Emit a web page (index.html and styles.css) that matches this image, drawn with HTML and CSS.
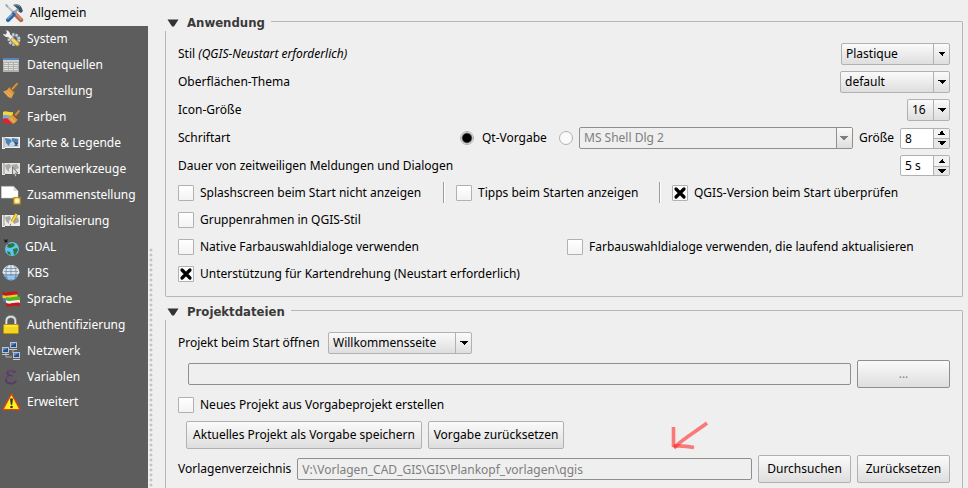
FILE: index.html
```html
<!DOCTYPE html>
<html lang="de">
<head>
<meta charset="utf-8">
<title>Optionen – Allgemein</title>
<link rel="stylesheet" href="styles.css">
</head>
<body>
<nav class="sidebar">
  <a class="item active" href="#allgemein"><svg class="icon" viewBox="0 0 20 20"><path d="M2 2l8 8" stroke="#b9c4cc" stroke-width="2"/><path d="M1 1l2 .5 1 2-1 1z" fill="#8fa3b3"/><path d="M10 10l7 7" stroke="#b5684a" stroke-width="4.4" stroke-linecap="round"/><path d="M10.500 9.500l7 7" stroke="#d59375" stroke-width="1.400"/><path d="M14 6L9 11" stroke="#8aa6bd" stroke-width="2.400"/><path d="M9.500 11.500L4 17" stroke="#2c62a6" stroke-width="4" stroke-linecap="round"/><path d="M8.500 11L3.500 16" stroke="#7fa9d9" stroke-width="1.200"/><path d="M9 2c3-1.600 6-.8 8 1.500L19 8l-2 2-2.500-1.500v-2L11.500 4z" fill="#3c5566"/><path d="M10 2.200c2.500-.8 4.500 0 6 1.500" stroke="#8ca2ae" fill="none"/></svg><span>Allgemein</span></a>
  <a class="item" href="#system"><svg class="icon" viewBox="0 0 20 20"><circle cx="13" cy="10.500" r="5" fill="#7d8ea3" stroke="#c3ced9" stroke-width="2.800" stroke-dasharray="2.300 1.200"/><circle cx="13" cy="10.500" r="3" fill="#4d6077"/><path d="M7 6l5 4" stroke="#efefec" stroke-width="3"/><path d="M2 5l3 .5L6 3 4.500 1.500C7 1 9.500 3 9 6 8 9 4 9 2 5z" fill="#f2f2ee"/><path d="M12 11l4.500 4" stroke="#b68a22" stroke-width="4.600" stroke-linecap="round"/><path d="M11.800 10.800l4.400 4" stroke="#f2d675" stroke-width="3" stroke-linecap="round"/></svg><span>System</span></a>
  <a class="item" href="#datenquellen"><svg class="icon" viewBox="0 0 20 20"><path fill="#b0b1ac" d="M2 3h16v14H2z"/><path fill="#5585bd" d="M2 3h16v2H2z"/><path fill="#cfcfcb" d="M2 5h16v2H2z"/><path fill="#e1e1dc" d="M3 8h4v1H3zm5 0h4v1H8zm5 0h4v1h-4zM3 10h4v1H3zm5 0h4v1H8zm5 0h4v1h-4zM3 12h4v1H3zm5 0h4v1H8zm5 0h4v1h-4zM3 14h4v1H3zm5 0h4v1H8zm5 0h4v1h-4z"/></svg><span>Datenquellen</span></a>
  <a class="item" href="#darstellung"><svg class="icon" viewBox="0 0 20 20"><path d="M11 8.500L16 3" stroke="#c57c28" stroke-width="2.200" stroke-linecap="round"/><path d="M11 8L16 2.500" stroke="#eeaa58" stroke-linecap="round"/><path d="M8.500 6l5 5.500-1 1.500-2 4.500-3.500-1.500-5-5.500 4-1.500z" fill="#dc9c45"/><path d="M8.500 6.200l5 5.500" stroke="#a56520" stroke-width="1.200"/><path d="M4 11l5 5M6 10l4.500 4.500" stroke="#f0b767" stroke-width=".9"/></svg><span>Darstellung</span></a>
  <a class="item" href="#farben"><svg class="icon" viewBox="0 0 20 20"><path d="M2 5c3-2 6 1 10 0v5c-4 1-7-2-10 0z" fill="#f4d932"/><path d="M2 8.500c3-2 6 1 9 0v4c-3 1-6-2-9 0z" fill="#79a6dd"/><path d="M2 12c3-2 7 1 10 0v4c-3 2-8-1-10 0z" fill="#df242b"/><path d="M14.500 8l3.500-4" stroke="#d48a34" stroke-width="2" stroke-linecap="round"/><path d="M12 7l5 5-2 3-3 2-5-5 2-3z" fill="#dc9c45"/><path d="M12 7.200l4.800 5" stroke="#8b5014" stroke-width="1.300"/><path d="M9.500 11l4 4" stroke="#f0bd73"/></svg><span>Farben</span></a>
  <a class="item" href="#karte"><svg class="icon" viewBox="0 0 20 20"><path fill="#f1f1ed" d="M1 4h18v11H4v1H1z"/><path fill="#c8d5e0" d="M4 5h14v9H4z"/><path fill="#4b82b8" d="M4 5l5 1 2 2-2 2-1 3-3-3zM11 5l6 1v5l-3-1-3-2zM12 13l4-2 1 2z"/><path d="M3 4v11" stroke="#9b9b98"/><path d="M13 9l4 1-2 3z" fill="#3e464e"/></svg><span>Karte &amp; Legende</span></a>
  <a class="item" href="#kartenwerkzeuge"><svg class="icon" viewBox="0 0 20 20"><path fill="#e5e5e0" d="M1 4h18v11H4v1H1z"/><path fill="#aaaba7" d="M4 6l5-1 1 3-2 2v3l-3-3zM10 6l6-1 2 4-4 2-3-3z"/><path d="M3 4v11" stroke="#969693"/><path d="M11.500 8l5.500 6-2.500.2 1.500 3-1.500.8-1.500-3-1.500 1.500z" fill="#d8d8d8" stroke="#5a5a5a" stroke-width=".8"/></svg><span>Kartenwerkzeuge</span></a>
  <a class="item" href="#zusammenstellung"><svg class="icon" viewBox="0 0 20 20"><path fill="#fff" stroke="#d0d0d0" stroke-width=".6" d="M.4 1.400h12.200L17 6v7H.4z"/><path fill="#d5d5d5" d="M12.600 1.400L17 6h-4.400z"/><path fill="#d8ad22" stroke="#a88112" stroke-width=".7" d="M12.400 12.400h7.200v6.800h-7.200z"/><path d="M16 13v5.500M13.300 15.800h5.400M14 13.800l4 4M18 13.800l-4 4" stroke="#fff6cf" stroke-width="1.200"/></svg><span>Zusammenstellung</span></a>
  <a class="item" href="#digitalisierung"><svg class="icon" viewBox="0 0 20 20"><path fill="#ecece8" d="M1 4h18v11H4v1H1z"/><path fill="#a7a8a5" d="M4 6l5-1 1 3-2 2v3l-3-3zM12 9l5-3 1 5-5 2z"/><path d="M3 4v11" stroke="#969693"/><path d="M11 11l4.500-8" stroke="#a67e10" stroke-width="3.400"/><path d="M11 11l4.500-8" stroke="#f6d444" stroke-width="2.200"/><path d="M9.500 10l3 1.500-3.500 3z" fill="#eee3bd"/><path d="M9.300 13l-.5 1.700 1.400-.8z" fill="#333"/></svg><span>Digitalisierung</span></a>
  <a class="item" href="#gdal"><svg class="icon icon-small" viewBox="0 0 18 20"><circle cx="11" cy="12" r="7" fill="#62c3ec"/><path d="M7 7l5-1 2 2-2 2-3 1-3-1zM12 12l4-1 1 2-2 4-2 1zM6 14l3 1 1 3-3-1z" fill="#2b7a3d"/><path d="M4 3l5 7" stroke="#6d4b50" stroke-width=".9"/><path d="M3 2l2 1 2-1-1 2 1 1-2 0-1 1-.5-2z" fill="#191919"/></svg><span>GDAL</span></a>
  <a class="item" href="#kbs"><svg class="icon" viewBox="0 0 20 20"><circle cx="10" cy="10" r="7.500" fill="#7fb2e6"/><path d="M1.500 9.500c1-10 16-10 17 0L17 12H3z" fill="#dfe5e9"/><path d="M2 11.500h16M3 8.500h14M4 5.500h12M4 14.500h12M10 2v15M6.500 3c-2 4-2 10 0 14M13.500 3c2 4 2 10 0 14" fill="none" stroke="#66849f" stroke-width=".7"/><path d="M6 13h8l-1 3H7z" fill="#a9d2f8" fill-opacity=".7"/></svg><span>KBS</span></a>
  <a class="item" href="#sprache"><svg class="icon" viewBox="0 0 20 20"><path d="M1.500 3c5 2 9-1.500 15 0v3c-6-1-10 2-15 0z" fill="#c91616"/><path d="M1.500 6c5 2 9-1 15-.5v3C11 8 7 11 1.500 9z" fill="#f2cc28"/><path d="M2 9c3 1 5 0 6-.5V13c-2 .5-4 0-6-1z" fill="#477fc4"/><path d="M5 8c5 2 9-1.500 14 0v3.500c-5-1-9 2-14 0z" fill="#49b62c"/><path d="M5 11.300c5 2 9-1.500 14 0v3c-5-1-9 2-14 0z" fill="#f2f2ee"/><path d="M5 14c5 2 9-1.500 14 0v3c-5-1-9 1.500-14 0z" fill="#c91616"/></svg><span>Sprache</span></a>
  <a class="item" href="#authentifizierung"><svg class="icon" viewBox="0 0 20 20"><path d="M5.500 10V6c0-6 9-6 9 0v4" fill="none" stroke="#8d9395" stroke-width="2.800"/><path d="M5.300 10V6c0-5.600 9-5.600 9 0v4" fill="none" stroke="#e3e6e6" stroke-width="1.400"/><rect x="2.500" y="9.500" width="15" height="9" rx="1" fill="#f1d51f" stroke="#b99407"/><path d="M4 11h12" stroke="#fff071"/></svg><span>Authentifizierung</span></a>
  <a class="item" href="#netzwerk"><svg class="icon" viewBox="0 0 20 20"><path d="M5 12v4h6M12 8v4h4" fill="none" stroke="#a9aeb0"/><path d="M9 1h7v6H9zM1 6h7v6H1zM12 11h7v6h-7z" fill="#b8c4cf"/><path d="M10 2h5v4h-5zM2 7h5v4H2zM13 12h5v4h-5z" fill="#234f8d"/><path d="M10 2h5l-5 3zM2 7h5l-5 3zM13 12h5l-5 3z" fill="#5789c8"/><path d="M8 8h8v1H8zM1 13h7v1H1zM12 18h7v1h-7z" fill="#c9cacb"/></svg><span>Netzwerk</span></a>
  <a class="item" href="#variablen"><svg class="icon" viewBox="0 0 20 20"><path d="M14 6c-.5-3.500-8-3.500-7.500.2C6.700 8.500 9 9 11.500 9 8 9 5 10.500 5 13c0 4.500 9 4.500 10 .5" fill="none" stroke="#5a3a67" stroke-width="2"/><path d="M6.800 5c2-3 5-2 6.500-.5M5.500 12c1-2 3-2.500 5-2.500" fill="none" stroke="#876492" stroke-width=".6"/></svg><span>Variablen</span></a>
  <a class="item last" href="#erweitert"><svg class="icon" viewBox="0 0 20 20"><path d="M10.500 2L19 17.500H2z" fill="#ffee12" stroke="#e43f1b" stroke-width="1.400" stroke-linejoin="round"/><path d="M10.500 3.500L17.500 17h-14z" fill="#fff31b"/><path d="M9 6.500h3l-.8 6.200H9.800z" fill="#333"/><circle cx="10.500" cy="15" r="1.300" fill="#333"/></svg><span>Erweitert</span></a>
</nav>
<div class="splitter"></div>
<main class="options">
  <section class="group">
    <h2 class="group-head"><svg class="triangle" viewBox="0 0 12 8"><path d="M.5.500h11L7 7.500H5z" fill="#333"/></svg><span>Anwendung</span></h2>
    <div class="group-body">
      <div class="row spread"><label for="stil">Stil <i>(QGIS-Neustart erforderlich)</i></label><span class="combo w-style"><select id="stil"><option>Plastique</option></select></span></div>
      <div class="row spread"><label for="thema">Oberflächen-Thema</label><span class="combo w-theme"><select id="thema"><option>default</option></select></span></div>
      <div class="row spread"><label for="icongr">Icon-Größe</label><span class="combo w-icon"><select id="icongr"><option>16</option></select></span></div>
      <div class="row font-row">
        <span class="font-title">Schriftart</span>
        <label class="radio-label"><input type="radio" name="font" checked>Qt-Vorgabe</label>
        <input type="radio" name="font" aria-label="Eigene Schriftart">
        <span class="combo disabled grow"><select aria-label="Schriftart" disabled><option>MS Shell Dlg 2</option></select></span>
        <label class="size-label" for="groesse">Größe</label>
        <span class="spin"><input id="groesse" type="text" value="8"><button type="button" aria-label="Größer"></button><button type="button" class="down" aria-label="Kleiner"></button></span>
      </div>
      <div class="row spread check-row"><label for="dauer">Dauer von zeitweiligen Meldungen und Dialogen</label><span class="spin"><input id="dauer" type="text" value="5 s"><button type="button" aria-label="Länger"></button><button type="button" class="down" aria-label="Kürzer"></button></span></div>
      <div class="row check-row thirds">
        <label class="check"><input type="checkbox">Splashscreen beim Start nicht anzeigen</label>
        <label class="check divided"><input type="checkbox">Tipps beim Starten anzeigen</label>
        <label class="check divided"><input type="checkbox" checked>QGIS-Version beim Start überprüfen</label>
      </div>
      <div class="row check-row"><label class="check"><input type="checkbox">Gruppenrahmen in QGIS-Stil</label></div>
      <div class="row check-row halves">
        <label class="check"><input type="checkbox">Native Farbauswahldialoge verwenden</label>
        <label class="check"><input type="checkbox">Farbauswahldialoge verwenden, die laufend aktualisieren</label>
      </div>
      <div class="row check-row"><label class="check"><input type="checkbox" checked>Unterstützung für Kartendrehung (Neustart erforderlich)</label></div>
    </div>
  </section>
  <section class="group open-ended">
    <h2 class="group-head"><svg class="triangle" viewBox="0 0 12 8"><path d="M.5.500h11L7 7.500H5z" fill="#333"/></svg><span>Projektdateien</span></h2>
    <div class="group-body">
      <div class="row"><label class="start-label" for="start">Projekt beim Start öffnen</label><span class="combo w-start"><select id="start"><option>Willkommensseite</option></select></span></div>
      <div class="row path-row"><input class="field" type="text" aria-label="Projektpfad" disabled><button class="button dim" type="button" disabled>...</button></div>
      <div class="row check-row"><label class="check"><input type="checkbox">Neues Projekt aus Vorgabeprojekt erstellen</label></div>
      <div class="row action-row"><button class="button w-save" type="button">Aktuelles Projekt als Vorgabe speichern</button><button class="button w-reset" type="button">Vorgabe zurücksetzen</button></div>
      <div class="row template-row"><label for="vorlagen">Vorlagenverzeichnis</label><input class="field" id="vorlagen" type="text" value="V:\Vorlagen_CAD_GIS\GIS\Plankopf_vorlagen\qgis" disabled><button class="button" type="button">Durchsuchen</button><button class="button" type="button">Zurücksetzen</button>
        <svg class="pointer" viewBox="0 0 40 30" aria-hidden="true"><g fill="none" stroke="#ff2a2a" stroke-opacity=".6" stroke-width="3.600"><path d="M37 2C27 10 12 18 4 27"/><path d="M3.500 6v20"/><path d="M4 25c7-.5 13 0 20 1.500"/></g></svg>
      </div>
    </div>
  </section>
</main>
</body>
</html>
```
FILE: styles.css
```css
* { box-sizing: border-box; }

body {
  margin: 0;
  height: 100vh;
  display: flex;
  overflow: hidden;
  background: #efefef;
  color: #000;
  font: 12px/16px "Noto Sans", "DejaVu Sans Condensed", sans-serif;
}

input, select, button { font: inherit; color: inherit; margin: 0; }

/* Sidebar */
.sidebar { flex: 0 0 148px; background: #5d5d5d; }
.item {
  display: flex;
  align-items: center;
  gap: 6px;
  height: 26px;
  padding-left: 1px;
  color: #fff;
  text-decoration: none;
  white-space: nowrap;
}
.item.active { padding-left: 4px; background: #efefef; color: #000; }
.item.last { height: 24px; }
.icon { flex: none; width: 20px; height: 20px; }
.icon-small { width: 18px; }

.splitter {
  flex: 0 0 17px;
  margin-top: 248px;
  background: radial-gradient(circle at 3px 2px, #c2c2c2 1px, #fafafa 2px, transparent 2px) 0 0 / 5px 5px repeat-y;
}

/* Groups */
.options {
  flex: 1;
  min-width: 0;
  display: flex;
  flex-direction: column;
  gap: 7px;
  padding: 15px 5px 0 0;
}
.group-head {
  display: flex;
  align-items: center;
  height: 16px;
  margin: 0;
  padding-left: 2px;
  color: #3a3a3a;
  font: bold 13px/16px "DejaVu Sans Condensed", "DejaVu Sans", sans-serif;
}
.group-head::after {
  content: "";
  flex: 1;
  align-self: flex-end;
  height: 9px;
  margin-left: 6px;
  border: solid #b6b6b6;
  border-width: 1px 1px 0 0;
  border-top-right-radius: 2px;
}
.triangle { width: 12px; height: 8px; margin-right: 8px; }
.group-body {
  display: flex;
  flex-direction: column;
  gap: 6px;
  padding: 12px;
  border: 1px solid #b6b6b6;
  border-top: 0;
  border-radius: 0 0 2px 2px;
}
.open-ended { flex: 1; display: flex; flex-direction: column; min-height: 0; }
.open-ended .group-body { flex: 1; padding-bottom: 0; border-bottom: 0; border-radius: 0; }

.row {
  display: flex;
  align-items: center;
  gap: 6px;
  min-height: 22px;
  white-space: nowrap;
}
.spread { justify-content: space-between; }
.check-row { min-height: 21px; }

/* Combo boxes */
.combo {
  display: grid;
  grid-template-columns: 1fr 16px;
  height: 22px;
  border: 1px solid #b1b1b1;
  border-radius: 2px;
  background: linear-gradient(#fafafa, #dedede);
}
.combo select {
  grid-area: 1 / 1 / 2 / 3;
  width: 100%;
  height: 20px;
  padding: 0 20px 0 4px;
  border: 0;
  appearance: none;
  background: none;
}
.combo::after {
  content: "";
  grid-area: 1 / 2;
  pointer-events: none;
  border-left: 1px solid #b1b1b1;
  background: conic-gradient(from -45deg at 50% 100%, #000 90deg, transparent 0) 50% 50% / 8px 4px no-repeat;
}
.combo.disabled { border-color: #8f8f8f; background: #efefef; }
.combo.disabled select { color: #7e7e7e; opacity: 1; }
.combo.disabled::after {
  border-color: #8f8f8f;
  background: conic-gradient(from -45deg at 50% 100%, #7e7e7e 90deg, transparent 0) 50% 50% / 8px 4px no-repeat, linear-gradient(#fafafa, #dedede);
}
.w-style { width: 109px; }
.w-theme { width: 110px; }
.w-icon { width: 43px; }
.w-start { width: 144px; }
.grow { flex: 1; }

/* Spin boxes */
.spin {
  display: grid;
  grid-template-columns: 1fr 16px;
  grid-template-rows: 1fr 1fr;
  width: 50px;
  height: 21px;
  border: 1px solid #b1b1b1;
  border-radius: 2px;
  background: #fff;
}
.spin input {
  grid-row: 1 / 3;
  width: 100%;
  height: 19px;
  padding: 0 4px;
  border: 0;
  background: none;
}
.spin button {
  padding: 0;
  border: 0;
  border-left: 1px solid #b1b1b1;
  background: conic-gradient(from 135deg at 50% 0, #000 90deg, transparent 0) 50% 50% / 8px 4px no-repeat, #f2f2f2;
}
.spin button.down {
  border-top: 1px solid #b1b1b1;
  background: conic-gradient(from -45deg at 50% 100%, #000 90deg, transparent 0) 50% 50% / 8px 4px no-repeat, #e6e6e6;
}

/* Radio buttons and tick boxes */
.font-title { flex: 0 0 276px; }
.size-label { flex: 0 0 34px; }
.start-label { flex: 0 0 144px; }
.radio-label { display: flex; align-items: center; gap: 8px; width: 93px; }
input[type="radio"] {
  flex: none;
  width: 14px;
  height: 14px;
  border: 1px solid #b1b1b1;
  border-radius: 50%;
  appearance: none;
  background: #fafafa;
}
input[type="radio"]:checked { background: radial-gradient(circle, #000 4px, #fafafa 6px); }
.check { display: flex; align-items: center; gap: 6px; }
input[type="checkbox"] {
  flex: none;
  width: 16px;
  height: 16px;
  border: 1px solid #b1b1b1;
  border-radius: 1px;
  appearance: none;
  background: linear-gradient(#fff, #f3f3f3);
}
input[type="checkbox"]:checked {
  background: url("data:image/svg+xml,%3Csvg xmlns='http://www.w3.org/2000/svg' viewBox='0 0 14 14'%3E%3Cpath d='M3 3l8 8M11 3l-8 8' stroke='%23000' stroke-width='3.2' stroke-linecap='round'/%3E%3C/svg%3E") center / 14px 14px #fafafa;
}
.thirds { display: grid; grid-template-columns: 259px 210px 1fr; align-items: stretch; }
.divided { padding-left: 13px; box-shadow: inset 1px 0 #9d9d9d, inset 2px 0 #fff; }
.halves { display: grid; grid-template-columns: 1fr 1fr; }

/* Fields and push buttons */
.field {
  flex: 1;
  min-width: 0;
  height: 22px;
  padding: 0 4px;
  border: 1px solid #8f8f8f;
  border-radius: 2px;
  background: #efefef;
  color: #7e7e7e;
}
.button {
  flex: none;
  width: 93px;
  height: 28px;
  padding: 0 4px;
  border: 1px solid #b1b1b1;
  border-radius: 2px;
  background: linear-gradient(#fafafa, #dedede);
}
.button.dim { border-color: #8f8f8f; color: #8a7e7e; }
.w-save { width: 236px; }
.w-reset { width: 136px; }
.path-row { padding-left: 10px; }
.action-row { padding-left: 8px; }
.template-row { position: relative; }
.template-row label { flex: 0 0 113px; }
.pointer {
  position: absolute;
  right: 240px;
  bottom: 32px;
  width: 40px;
  height: 30px;
}
```
